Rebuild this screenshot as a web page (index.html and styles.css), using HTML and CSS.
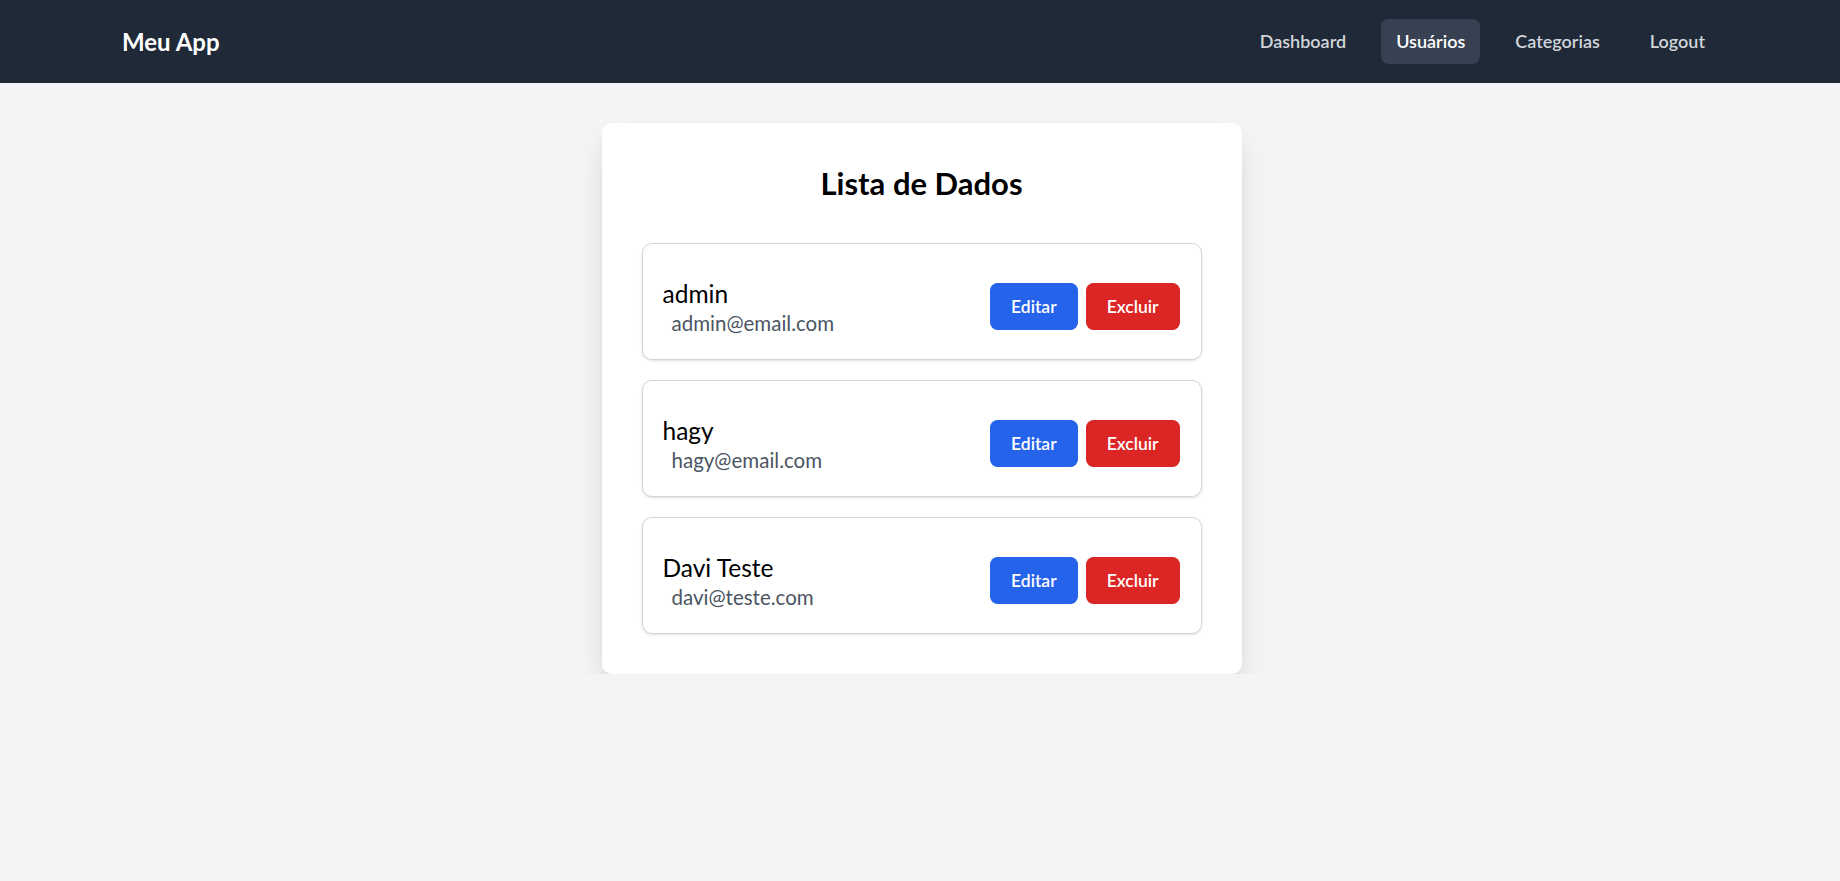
FILE: index.html
```html
<!DOCTYPE html>
<html lang="pt-BR">
<head>
<meta charset="utf-8">
<title>Meu App</title>
<link rel="stylesheet" href="styles.css">
</head>
<body>
<header class="navbar">
  <div class="nav-inner">
    <a class="brand" href="#">Meu App</a>
    <nav class="nav-links">
      <a class="nav-link" href="#">Dashboard</a>
      <a class="nav-link active" href="#">Usuários</a>
      <a class="nav-link" href="#">Categorias</a>
      <a class="nav-link" href="#">Logout</a>
    </nav>
  </div>
</header>
<main class="page">
  <section class="card">
    <h1 class="card-title">Lista de Dados</h1>
    <ul class="list">
      <li class="item">
        <div class="item-info">
          <div class="item-name">admin</div>
          <div class="item-email">admin@email.com</div>
        </div>
        <div class="item-actions">
          <button class="btn btn-edit">Editar</button>
          <button class="btn btn-delete">Excluir</button>
        </div>
      </li>
      <li class="item">
        <div class="item-info">
          <div class="item-name">hagy</div>
          <div class="item-email">hagy@email.com</div>
        </div>
        <div class="item-actions">
          <button class="btn btn-edit">Editar</button>
          <button class="btn btn-delete">Excluir</button>
        </div>
      </li>
      <li class="item">
        <div class="item-info">
          <div class="item-name">Davi Teste</div>
          <div class="item-email">davi@teste.com</div>
        </div>
        <div class="item-actions">
          <button class="btn btn-edit">Editar</button>
          <button class="btn btn-delete">Excluir</button>
        </div>
      </li>
    </ul>
  </section>
</main>
</body>
</html>
```
FILE: styles.css
```css
* { box-sizing: border-box; }

body {
  margin: 0;
  background: #f3f4f6;
  font-family: Lato, "Open Sans", "Noto Sans", sans-serif;
  color: #111827;
}

.navbar {
  background: #1f2937;
  height: 83px;
}

.nav-inner {
  width: 1600px;
  margin: 0 auto;
  height: 100%;
  display: flex;
  align-items: center;
  justify-content: space-between;
}

.brand {
  color: #ffffff;
  text-decoration: none;
  font-weight: 700;
  font-size: 24px;
  line-height: 34px;
  padding-left: 2px;
}

.nav-links {
  display: flex;
  gap: 20px;
}

.nav-link {
  color: #d1d5db;
  text-decoration: none;
  font-weight: 600;
  font-size: 18px;
  line-height: 25px;
  padding: 10px 15px;
  border-radius: 7.5px;
}

.nav-link.active {
  background: #374151;
  color: #ffffff;
}

.page {
  padding: 40px 0 0 3px;
}

.card {
  width: 640px;
  margin: 0 auto;
  background: #ffffff;
  border-radius: 10px;
  padding: 40px;
  box-shadow: 0 16px 30px -4px rgba(0, 0, 0, 0.12), 0 6px 12px -6px rgba(0, 0, 0, 0.1);
}

.card-title {
  margin: 0 0 40px;
  text-align: center;
  font-size: 31px;
  line-height: 40px;
  font-weight: 700;
  color: #000000;
}

.list {
  list-style: none;
  margin: 0;
  padding: 0;
  display: flex;
  flex-direction: column;
  gap: 20px;
}

.item {
  height: 117px;
  border: 1px solid #d1d5db;
  border-radius: 10px;
  box-shadow: 0 1px 3px rgba(0, 0, 0, 0.1), 0 1px 2px -1px rgba(0, 0, 0, 0.1);
  padding: 35px 21px 22px 20px;
  display: flex;
  align-items: center;
  justify-content: space-between;
}

.item-name {
  font-size: 24.5px;
  line-height: 30px;
  color: #000000;
}

.item-email {
  font-size: 20.5px;
  line-height: 28px;
  color: #4b5563;
  margin-left: 9px;
}

.item-actions {
  display: flex;
  gap: 8px;
  margin-bottom: 4px;
}

.btn {
  font-family: inherit;
  font-size: 17.5px;
  font-weight: 600;
  line-height: 25px;
  padding: 11px 21px;
  border: none;
  border-radius: 7.5px;
  color: #ffffff;
  cursor: pointer;
}

.btn-edit { background: #2563eb; }
.btn-delete { background: #dc2626; }
```
